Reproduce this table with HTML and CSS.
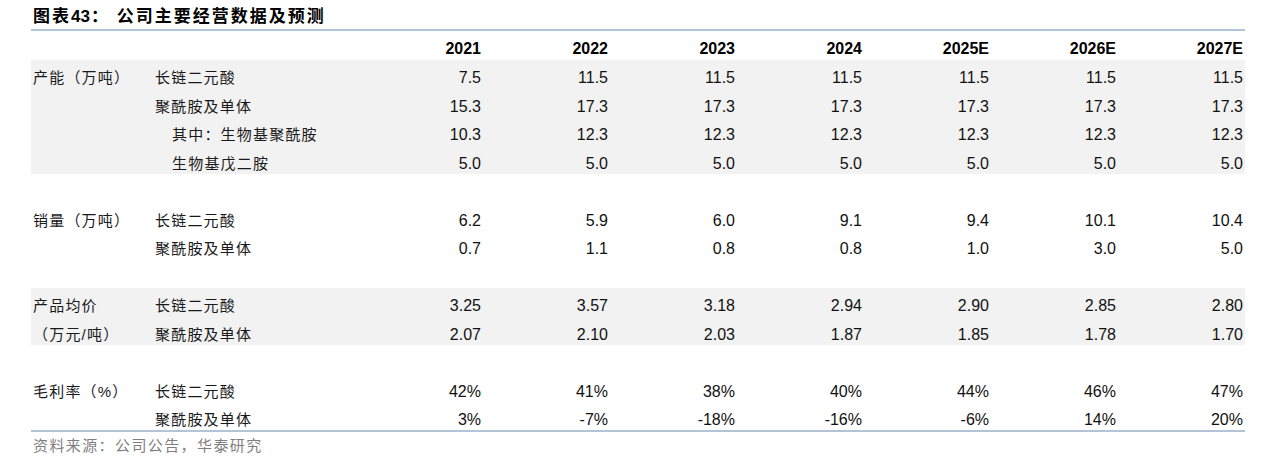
FILE: index.html
```html
<!DOCTYPE html>
<html lang="zh-CN">
<head>
<meta charset="utf-8">
<title>图表43：公司主要经营数据及预测</title>
<link rel="stylesheet" href="styles.css">
</head>
<body>
<div class="report">
  <div class="title">图表<span class="num">43</span>： 公司主要经营数据及预测</div>
  <table class="data">
    <colgroup>
      <col class="c-cat"><col class="c-item">
      <col class="c-num"><col class="c-num"><col class="c-num"><col class="c-num"><col class="c-num"><col class="c-num"><col class="c-num">
    </colgroup>
    <thead>
      <tr><th></th><th></th><th>2021</th><th>2022</th><th>2023</th><th>2024</th><th>2025E</th><th>2026E</th><th>2027E</th></tr>
    </thead>
    <tbody>
      <tr class="shade"><td class="cat">产能（万吨）</td><td class="item">长链二元酸</td><td>7.5</td><td>11.5</td><td>11.5</td><td>11.5</td><td>11.5</td><td>11.5</td><td>11.5</td></tr>
      <tr class="shade"><td class="cat"></td><td class="item">聚酰胺及单体</td><td>15.3</td><td>17.3</td><td>17.3</td><td>17.3</td><td>17.3</td><td>17.3</td><td>17.3</td></tr>
      <tr class="shade"><td class="cat"></td><td class="item sub">其中：生物基聚酰胺</td><td>10.3</td><td>12.3</td><td>12.3</td><td>12.3</td><td>12.3</td><td>12.3</td><td>12.3</td></tr>
      <tr class="shade"><td class="cat"></td><td class="item sub">生物基戊二胺</td><td>5.0</td><td>5.0</td><td>5.0</td><td>5.0</td><td>5.0</td><td>5.0</td><td>5.0</td></tr>
      <tr class="gap"><td colspan="9"></td></tr>
      <tr><td class="cat">销量（万吨）</td><td class="item">长链二元酸</td><td>6.2</td><td>5.9</td><td>6.0</td><td>9.1</td><td>9.4</td><td>10.1</td><td>10.4</td></tr>
      <tr><td class="cat"></td><td class="item">聚酰胺及单体</td><td>0.7</td><td>1.1</td><td>0.8</td><td>0.8</td><td>1.0</td><td>3.0</td><td>5.0</td></tr>
      <tr class="gap"><td colspan="9"></td></tr>
      <tr class="shade"><td class="cat">产品均价</td><td class="item">长链二元酸</td><td>3.25</td><td>3.57</td><td>3.18</td><td>2.94</td><td>2.90</td><td>2.85</td><td>2.80</td></tr>
      <tr class="shade"><td class="cat">（万元/吨）</td><td class="item">聚酰胺及单体</td><td>2.07</td><td>2.10</td><td>2.03</td><td>1.87</td><td>1.85</td><td>1.78</td><td>1.70</td></tr>
      <tr class="gap"><td colspan="9"></td></tr>
      <tr><td class="cat">毛利率（%）</td><td class="item">长链二元酸</td><td>42%</td><td>41%</td><td>38%</td><td>40%</td><td>44%</td><td>46%</td><td>47%</td></tr>
      <tr class="last"><td class="cat"></td><td class="item">聚酰胺及单体</td><td>3%</td><td>-7%</td><td>-18%</td><td>-16%</td><td>-6%</td><td>14%</td><td>20%</td></tr>
    </tbody>
  </table>
  <div class="source">资料来源：公司公告，华泰研究</div>
</div>
</body>
</html>
```

FILE: styles.css
```css
html, body {
  margin: 0;
  padding: 0;
  background: #ffffff;
}

body {
  font-family: "Liberation Sans", "Noto Sans CJK SC", sans-serif;
  color: #111111;
}

.report {
  margin-left: 31px;
  width: 1214px;
  padding-top: 5px;
}

.title {
  padding-left: 2px;
  font-size: 17px;
  font-weight: bold;
  line-height: 24px;
  letter-spacing: 2px;
  color: #000000;
  border-bottom: 2px solid #b3c4d6;
}

.title .num {
  letter-spacing: 0;
  margin-right: 1px;
}

.data {
  width: 1214px;
  table-layout: fixed;
  border-collapse: collapse;
  border-bottom: 2px solid #b3c4d6;
}

.c-cat { width: 124px; }
.c-item { width: 201px; }
.c-num { width: 127px; }

.data th {
  height: 29px;
  padding: 6px 2px 0 0;
  box-sizing: border-box;
  text-align: right;
  font-size: 16px;
  font-weight: bold;
  line-height: 23px;
  color: #000000;
}

.data td {
  height: 28.5px;
  padding: 7px 2px 0 0;
  box-sizing: border-box;
  text-align: right;
  font-size: 16px;
  line-height: 21px;
  white-space: nowrap;
  vertical-align: top;
  color: #111111;
}

.data td.cat,
.data td.item {
  text-align: left;
  font-size: 15px;
  letter-spacing: 1.2px;
  color: #1a1a1a;
}

.data td.cat {
  padding-left: 2px;
}

.data td.item {
  padding-left: 0;
}

.data td.sub {
  padding-left: 17px;
}

.data tr.shade td {
  background: #f2f2f2;
}

.data tr.gap td {
  height: 28.5px;
  padding: 0;
}

.source {
  padding: 4px 0 0 2px;
  font-size: 15px;
  line-height: 20px;
  letter-spacing: 1.4px;
  color: #7f7f7f;
}
```
